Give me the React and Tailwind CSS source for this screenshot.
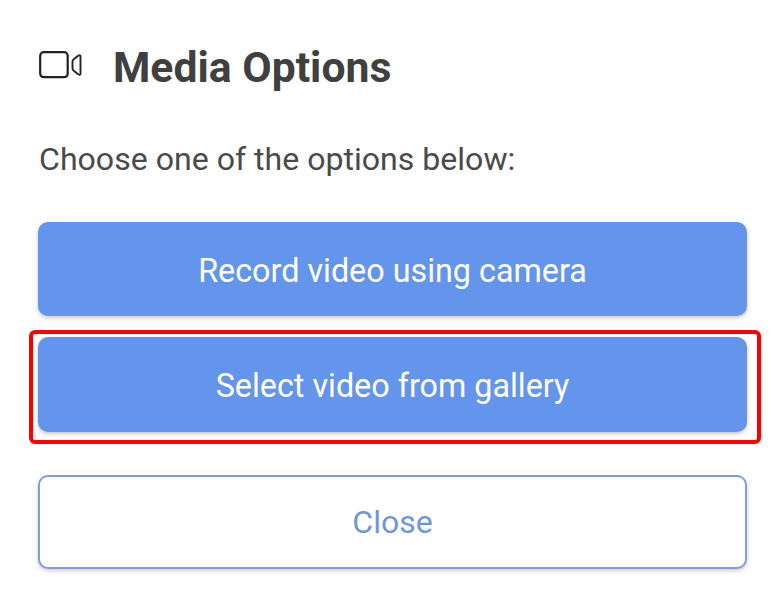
export default function App() {
  return (
    <div className="w-[784px] h-[606px] bg-white overflow-hidden pt-[42px] px-[39px] font-['Roboto',sans-serif]">
      <div className="flex items-center h-[50px]">
        <svg width="44" height="32" viewBox="0 0 44 32" fill="none" stroke="#222222" strokeWidth="2.2" className="shrink-0">
          <rect x="1.2" y="1.2" width="27.5" height="25" rx="3.5" />
          <path d="M33.5 10.5 Q33.5 9 35 8 L39.5 4.5 Q41.5 3.5 41.5 5.5 V22.5 Q41.5 24.5 39.5 23.5 L35 20 Q33.5 19 33.5 17.5 Z" strokeWidth="1.9" strokeLinejoin="round" />
        </svg>
        <h1 className="ml-[30px] text-[42.7px] leading-[50px] font-bold text-[#404040]">Media Options</h1>
      </div>
      <p className="mt-[47px] text-[32.1px] leading-[40px] text-[#4a4a4a]">Choose one of the options below:</p>
      <div className="mt-[43px] -ml-px flex flex-col">
        <button className="h-[94px] w-[709px] pt-[4px] rounded-[10px] bg-[#6495ed] text-white text-[32.3px] shadow-[0_2px_4px_rgba(0,0,0,0.22)]">Record video using camera</button>
        <div className="relative mt-[21px]">
          <button className="h-[95px] w-[709px] pt-[4px] rounded-[10px] bg-[#6495ed] text-white text-[32.3px] shadow-[0_2px_4px_rgba(0,0,0,0.22)]">Select video from gallery</button>
          <div className="absolute left-[-9px] top-[-7px] w-[732px] h-[114px] border-[4px] border-[#ff0000] rounded-[6px]"></div>
        </div>
        <button className="mt-[43px] h-[94px] w-[709px] rounded-[10px] bg-white border-2 border-[#7f9fd6] text-[#6e96dc] text-[32px] shadow-[0_2px_4px_rgba(0,0,0,0.2)]">Close</button>
      </div>
    </div>
  );
}
